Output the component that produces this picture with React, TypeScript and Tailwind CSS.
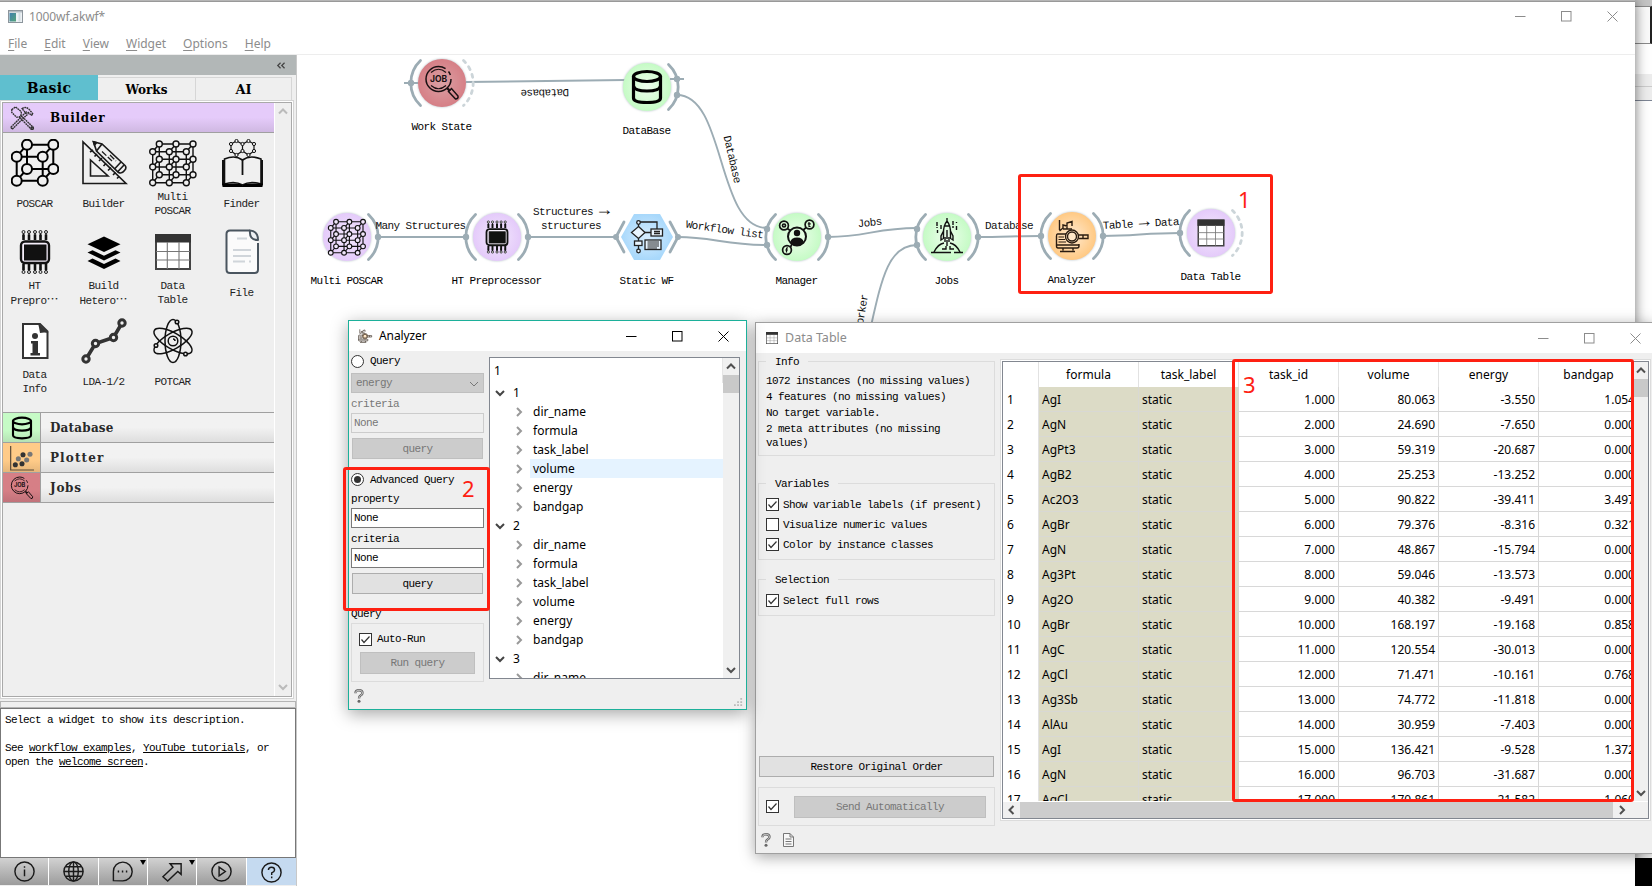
import React from "react";

const sim = "font-['Liberation_Mono',monospace] text-[11px] tracking-[-0.6px] whitespace-pre";
const slab = "font-['DejaVu_Serif',serif] font-bold whitespace-pre";
const wire = "#9cacb4";

/* ---------- glyphs ---------- */

type P = { className?: string };

const cubeEdges = "M5.7 17.7H31.7V41.7H5.7ZM16 5.7H42.3V30H16ZM5.7 17.7L16 5.7M31.7 17.7L42.3 5.7M5.7 41.7L16 30M31.7 41.7L42.3 30";
const cubeNodes = [[16, 5.7], [42.3, 5.7], [16, 30], [42.3, 30], [5.7, 17.7], [31.7, 17.7], [5.7, 41.7], [31.7, 41.7]];

const Cube = () => (
  <g stroke="#000" strokeWidth="2" fill="none">
    <path d={cubeEdges} />
    {cubeNodes.map(([x, y]) => <circle key={`${x}-${y}`} cx={x} cy={y} r="5" fill="#f0f0f0" />)}
  </g>
);

const fx = [3.7, 20.3, 37.3], fy = [12.7, 28, 43.7], bx = [10.3, 27, 44], by = [5, 20.3, 35.7];
const Lattice = ({ fill = "#f0f0f0" }: { fill?: string }) => (
  <g stroke="#111" strokeWidth="1.4" fill="none">
    {[0, 1, 2].map((i) => (
      <path key={i} d={`M${fx[0]} ${fy[i]}H${fx[2]}M${bx[0]} ${by[i]}H${bx[2]}M${fx[i]} ${fy[0]}V${fy[2]}M${bx[i]} ${by[0]}V${by[2]}`} />
    ))}
    {[0, 1, 2].map((i) => [0, 1, 2].map((j) => (
      <path key={`${i}${j}`} d={`M${fx[i]} ${fy[j]}L${bx[i]} ${by[j]}`} />
    )))}
    {[0, 1, 2].map((i) => [0, 1, 2].map((j) => (
      <g key={`${i}${j}`} fill={fill}>
        <circle cx={bx[i]} cy={by[j]} r="3" />
        <circle cx={fx[i]} cy={fy[j]} r="3" />
      </g>
    )))}
  </g>
);

const SetSquare = () => (
  <g stroke="#1a1a1a" strokeWidth="1.6" fill="none">
    <path d="M3 3V44.500H46ZM10.500 21V37H28Z" />
    <path d="M10 13l3-2M14.500 17.500l2.500-2.500M19 22l3-3M23.500 27l2.500-2.500M28 31.500l3-3M33 36l2.500-2.500M37 39.500l2-2" />
    <path d="M13.500 2.800L22 5 45 26.500Q47 29 44.500 31.500 42 35 38.500 33.500L16.500 12Z" fill="#f0f0f0" />
    <path d="M16.500 12L22 5M37.500 33L44 26M34.500 30L41 23" />
    <path d="M22 12.500l10 9.500M30 16l6 6" strokeWidth="1.300" strokeDasharray="6 2" />
    <path d="M13.500 2.800l3 .800-2 2.500z" fill="#111" />
  </g>
);

const Book = () => (
  <g stroke="#111" fill="none">
    <path d="M6 21V46.500M43 21V46.500" strokeWidth="4" />
    <path d="M6.500 20Q17 15.500 24.500 21 32 15.500 43 20V45Q32 41.500 24.500 46 17 41.500 6.500 45Z" fill="#f0f0f0" strokeWidth="1.6" />
    <path d="M24.500 21V36" strokeWidth="1.8" />
    <path d="M4.500 44.500H20Q23 44.500 24.500 46.500 26 44.500 30 44.500H44.500V48H4.500Z" fill="#000" stroke="none" />
    <path d="M18.500 2L24.500 5 30.500 2 36 5V12L30.500 16 24.500 12 18.500 16 13 12V5ZM24.500 5V12M18.500 16V18M30.500 16V18" strokeWidth="1.2" />
    {[[18.500, 2], [30.500, 2], [13, 5], [36, 5], [13, 12], [36, 12], [18.500, 16], [30.500, 16], [24.500, 5], [24.500, 12]].map(([x, y]) => (
      <circle key={`${x}-${y}`} cx={x} cy={y} r="1.6" fill="#f0f0f0" strokeWidth="1" />
    ))}
  </g>
);

const Chip = () => (
  <g stroke="#111" fill="none">
    <rect x="10" y="13.500" width="28" height="21.500" rx="4" strokeWidth="2.400" fill="#f5eefa" />
    <rect x="13.500" y="17" width="21.500" height="15" fill="#111" strokeWidth="1" />
    {[12.500, 18, 24, 29.500, 35].map((x) => (
      <g key={x}>
        <path d={`M${x} 6.500V12M${x} 36V42`} strokeWidth="2.600" />
        <path d={`M${x} 4V9M${x} 39V44`} strokeWidth="1.3" />
        <circle cx={x} cy="4" r="1.500" fill="#ddd" strokeWidth=".9" />
        <circle cx={x} cy="44" r="1.500" fill="#ddd" strokeWidth=".9" />
      </g>
    ))}
  </g>
);

const Layers = () => (
  <g fill="#000">
    <path d="M24 8.500L40.500 16.200 24 24 7.500 16.200Z" />
    <path d="M7.500 24.500L12.500 22.200 24 27.700 35.500 22.200 40.500 24.500 24 32.500Z" />
    <path d="M7.500 33L12.500 30.600 24 36 35.500 30.600 40.500 33 24 41Z" />
  </g>
);

const Grid = () => (
  <g>
    <rect x="7" y="7" width="34" height="34" fill="#fff" stroke="#444" strokeWidth="2" />
    <path d="M6 6H42V14.500H6Z" fill="#333" />
    <path d="M18.300 14V41M30 14V41M7 23.500H41M7 32H41" stroke="#777" strokeWidth="1.1" />
  </g>
);

const FileDoc = () => (
  <g fill="none" stroke="#4a555f" strokeWidth="2" strokeLinejoin="round">
    <path d="M32 2.500H12Q8.500 2.500 8.500 6V41.500Q8.500 45 12 45H36.500Q40 45 40 41.500V15" fill="#fbfbfb" />
    <path d="M32 2.500Q40 3 40 12 31 12 32 2.500Z" fill="#eef1f4" />
    <path d="M19 10.500H29M15 22H33M15 28H33M15 33.500H27M31 33.500H33" stroke="#d0d5da" strokeWidth="2" />
  </g>
);

const InfoDoc = () => (
  <g>
    <path d="M12 7H29L36.500 14.500V41H12Z" fill="#fff" stroke="#333" strokeWidth="2" />
    <path d="M27 6L37.500 16Q33 15 29 16 28 10 27 6Z" fill="#333" />
    <circle cx="24" cy="19" r="3" fill="#333" />
    <path d="M20 24H27V36H29V38.500H19.500V36H21.500V26.500H20Z" fill="#333" />
  </g>
);

const Polyline = () => (
  <g stroke="#333" fill="#f0f0f0">
    <path d="M6 42L15.500 26.500 33.500 20.500 42 6" fill="none" strokeWidth="3.600" />
    {[[6, 42], [15.500, 26.500], [33.500, 20.500], [42, 6]].map(([x, y]) => <circle key={x} cx={x} cy={y} r="3.200" strokeWidth="3" />)}
  </g>
);

const Atom = () => (
  <g fill="none" stroke="#111" strokeWidth="1.5">
    <ellipse cx="24" cy="24" rx="8" ry="21.500" />
    <ellipse cx="24" cy="24" rx="8" ry="21.500" transform="rotate(60 24 24)" />
    <ellipse cx="24" cy="24" rx="8" ry="21.500" transform="rotate(-60 24 24)" />
    <circle cx="24" cy="24" r="4.800" fill="#f0f0f0" />
    <path d="M24 22q2 0 2 2" />
    <circle cx="28" cy="5" r="1.800" fill="#f0f0f0" />
    <circle cx="7" cy="28.500" r="1.800" fill="#f0f0f0" />
    <circle cx="36.500" cy="37" r="1.800" fill="#f0f0f0" />
  </g>
);

const Cylinder = ({ fill = "none" }: { fill?: string }) => (
  <g stroke="#000" strokeWidth="3.200" fill={fill}>
    <path d="M10.500 13V35Q10.500 39.500 24 39.500T37.500 35V13" />
    <ellipse cx="24" cy="13.500" rx="13.500" ry="5" />
    <path d="M10.500 23Q11.500 28 24 28T37.500 23" fill="none" />
  </g>
);

const JobLens = () => (
  <g fill="none" stroke="#1a1012" strokeWidth="1.5">
    <circle cx="20.500" cy="20" r="12.500" strokeDasharray="66 4 4 4" />
    <path d="M13 13.500Q20.500 7 28 13.500M13 26.500Q20.500 33 28 26.500" strokeWidth="1.200" />
    <path d="M29 29L32 32" strokeWidth="2.400" />
    <path d="M30.500 32.500L33.500 29.500 40 37Q40.500 40 37.500 40Z" />
    <text x="20.500" y="23" textAnchor="middle" className="font-['Inter',sans-serif] text-[8.5px] font-bold" fill="#1a1012" stroke="none">JOB</text>
  </g>
);

const Scatter = () => (
  <g>
    <path d="M7 6V42H42" fill="none" stroke="#5b4a38" strokeWidth="1.8" />
    {[[14, 34], [24, 32.500], [25.500, 19]].map(([x, y]) => <circle key={x} cx={x} cy={y} r="3.800" fill="#333" />)}
    {[[18.500, 25], [31, 27], [36, 18.500]].map(([x, y]) => <circle key={x} cx={x} cy={y} r="3.800" fill="#777" />)}
  </g>
);

const Tools = () => (
  <g fill="none" stroke="#333" strokeWidth="1.500">
    <path d="M3 5L7 2 13 7Q14 11 11 13L8 13 3 8ZM10.500 12.500L24 26M12.500 11L26 24Q26 27 24 26" strokeDasharray="2 .6" />
    <path d="M2 24L19 7M3.500 26L21 9M2 24L3.500 26M14 4Q18 1 22 5L26 10 24 11 21 8 18 9 16 6Z" strokeDasharray="2 .6" />
    <circle cx="25" cy="25" r="1.300" />
  </g>
);

const FlowChart = () => (
  <g fill="#e9f5ff" stroke="#222" strokeWidth="1.300">
    <path d="M15.500 9V40M15.500 9H34V18M20 19.500H28" fill="none" />
    <circle cx="15.500" cy="9.500" r="1.800" />
    <path d="M15.500 13.500L22 19.500 15.500 25.500 8.500 19.500Z" />
    <rect x="28" y="16" width="11.500" height="7" />
    <path d="M31 18.500H37M31 20.500H37" />
    <rect x="11.500" y="28" width="7.500" height="4.500" />
    <circle cx="15.500" cy="38" r="1.800" />
    <rect x="22" y="27" width="16" height="9.500" />
    <path d="M24.500 29H36M24.500 31H36M24.500 33H36M24.500 35H34" strokeWidth="1" />
  </g>
);

const Network = () => (
  <g fill="none" stroke="#111" strokeWidth="1.700">
    <path d="M12 14L18 18M35 13L29 18M17 35L20 29" />
    <circle cx="24" cy="23.500" r="9" strokeWidth="2" fill="#e4ffe2" />
    <circle cx="24" cy="20" r="3.200" fill="#111" stroke="none" />
    <path d="M17.500 29Q18 24.500 24 24.500T30.500 29Q28 32.500 24 32.500T17.500 29Z" fill="#111" stroke="none" />
    <circle cx="11" cy="12.500" r="4.400" fill="#dcfbd9" />
    <circle cx="36.500" cy="11.500" r="4.400" fill="#dcfbd9" />
    <circle cx="14" cy="37" r="4.400" fill="#dcfbd9" />
    <circle cx="11" cy="12.500" r="1.500" />
    <path d="M36 9V13.500H37.500M34.800 10.800H37.800M15 35Q13.500 34.500 13.500 36V39.500M12.300 37H15" strokeWidth="1.200" />
  </g>
);

const Rocket = () => (
  <g fill="none" stroke="#111" strokeWidth="1.400">
    <path d="M24 8Q20 13 20.500 21V25H27.500V21Q28 13 24 8ZM24 8V5M20.500 18L18 23V27L21 25M27.500 18L30 23V27L27 25M22 13H26M24 17V24M24 27V33M22 26V29M26 26V29" />
    <path d="M14 9V15M14.500 17V20M18 12V17M30 8V15M33.500 9V10M33.500 13V18" strokeDasharray="4 1" />
    <path d="M11 39Q15 31 21 30M37 39Q33 31 27 30M8 39.500H28M31 39.500H40M19 36H23V33M27 33V36H31" />
  </g>
);

const Analyze = () => (
  <g fill="none" stroke="#2a1c10" strokeWidth="1.400">
    <path d="M11.500 8V18M11.500 19L15 16V13L19 14V11L24 9.500V14M15 17H24M19 14V17" />
    <path d="M20 22H9.500Q8.500 22 8.500 24V34Q8.500 36 10 36H29Q31 36 31 34V32M8.500 33H31M15 36V38.500M25 36V38.500M12 39.500H27" />
    <path d="M10.500 25H16M10.500 27.500H17M10.500 30H18" strokeWidth="1.100" />
    <circle cx="24" cy="24.500" r="6.500" fill="#ffe7c7" />
    <circle cx="24" cy="24.500" r="4.500" />
    <path d="M30.500 23H40V26.500H30.500M35 23V26.500" />
  </g>
);

const Icon = ({ className, children }: P & { children: React.ReactNode }) => (
  <svg viewBox="0 0 48 48" className={className ?? "size-12"}>{children}</svg>
);

const Chevron = ({ dir, className, w = 2 }: { dir: "up" | "down" | "left" | "right"; className?: string; w?: number }) => {
  const d = { up: "M1 6.500L5 2.500 9 6.500", down: "M1 3L5 7 9 3", left: "M6.500 1L2.500 5 6.500 9", right: "M3 1L7 5 3 9" }[dir];
  return <svg viewBox="0 0 10 10" className={className ?? "size-2.5"}><path d={d} fill="none" stroke="currentColor" strokeWidth={w} /></svg>;
};

const WinButtons = ({ className = "" }: P) => (
  <div className={`flex items-center gap-[35px] ${className}`}>
    <svg className="size-[11px]" viewBox="0 0 11 11"><path d="M0 5.500H10.500" stroke="currentColor" /></svg>
    <svg className="size-[11px]" viewBox="0 0 11 11"><rect x=".5" y=".5" width="9.500" height="9.500" fill="none" stroke="currentColor" /></svg>
    <svg className="size-[11px]" viewBox="0 0 11 11"><path d="M.5 .5L10.500 10.500M10.500 .5L.5 10.500" stroke="currentColor" /></svg>
  </div>
);

const Check = ({ on = true }: { on?: boolean }) => (
  <svg viewBox="0 0 13 13" className="size-[13px] shrink-0">
    <rect x=".5" y=".5" width="12" height="12" fill="#fff" stroke="#333" />
    {on && <path d="M2.500 6.500L5 9.500 10.500 3.500" fill="none" stroke="#333" strokeWidth="1.200" />}
  </svg>
);

const Radio = ({ on = false }: { on?: boolean }) => (
  <svg viewBox="0 0 13 13" className="size-[13px] shrink-0">
    <circle cx="6.500" cy="6.500" r="6" fill="#fff" stroke="#333" />
    {on && <circle cx="6.500" cy="6.500" r="3.500" fill="#333" />}
  </svg>
);

const HelpMark = () => (
  <svg viewBox="0 0 10 14" className="h-[14px] w-[10px]">
    <path d="M1.500 4.200Q1.500 1.200 5 1.200T8.500 4Q8.500 5.500 6.500 6.500 5 7.300 5 9.500" fill="none" stroke="#666" strokeWidth="2.400" />
    <path d="M1.500 4.200Q1.500 1.200 5 1.200T8.500 4Q8.500 5.500 6.500 6.500 5 7.300 5 9.500" fill="none" stroke="#ddd" strokeWidth=".8" />
    <circle cx="5" cy="12.300" r="1.500" fill="#666" />
  </svg>
);

/* ---------- sidebar ---------- */

const Dots = () => <span lang="zh-CN" className="font-['Noto_Sans_CJK_SC',sans-serif] text-[12px] leading-none tracking-normal">…</span>;

const tools: { id: string; icon: React.ReactNode; label: React.ReactNode }[] = [
  { id: "poscar", icon: <Cube />, label: "POSCAR" },
  { id: "builder", icon: <SetSquare />, label: "Builder" },
  { id: "multi", icon: <Lattice />, label: "Multi\nPOSCAR" },
  { id: "finder", icon: <Book />, label: "Finder" },
  { id: "ht", icon: <Chip />, label: <>{"HT\nPrepro"}<Dots /></> },
  { id: "hetero", icon: <Layers />, label: <>{"Build\nHetero"}<Dots /></> },
  { id: "table", icon: <Grid />, label: "Data\nTable" },
  { id: "file", icon: <FileDoc />, label: "File" },
  { id: "info", icon: <InfoDoc />, label: "Data\nInfo" },
  { id: "lda", icon: <Polyline />, label: "LDA-1/2" },
  { id: "potcar", icon: <Atom />, label: "POTCAR" },
];

const categories = [
  { label: "Database", track: "tracking-[0.2px]", bg: "bg-linear-to-b from-[#c6fbc6] from-60% to-[#b5e2b4]", icon: <Cylinder /> },
  { label: "Plotter", track: "tracking-[1.1px]", bg: "bg-linear-to-b from-[#ffcb88] from-60% to-[#e6b67a]", icon: <Scatter /> },
  { label: "Jobs", track: "tracking-[0.7px]", bg: "bg-linear-to-b from-[#d67f86] from-60% to-[#c1727a]", icon: <JobLens /> },
];

const footIcons = [
  <g key="i"><circle cx="12" cy="12" r="10" /><path d="M12 10V17M12 6.500V8.200" /></g>,
  <g key="g"><circle cx="12" cy="12" r="10" /><ellipse cx="12" cy="12" rx="5" ry="10" /><path d="M12 2V22M2 12H22M4 7H20M4 17H20" /></g>,
  <g key="c"><path d="M2.500 21.500V12A9.800 9.800 0 1 1 12 21.800Z" /><path d="M7 12H8.500M11.300 12H12.800M15.500 12H17" strokeWidth="2" /></g>,
  <g key="a"><path d="M2 17.500L12.500 7.500 9.500 4H21V15L17.500 12 7 22Z" /></g>,
  <g key="p"><circle cx="12" cy="12" r="10" /><path d="M9.500 7.500L16 12 9.500 16.500Z" /></g>,
  <g key="h"><circle cx="12" cy="12" r="10" /><path d="M8.800 9.500Q8.800 6.500 12 6.500T15.200 9.300Q15.200 11 12.200 12.500V14.500M12.200 16.200V18" /></g>,
];

const Sidebar = () => (
  <aside className="flex w-[297px] shrink-0 flex-col border-r border-[#c8c8c8] bg-[#efefef]">
    <div className="flex h-5 items-center justify-end bg-[#b2b7b7] pr-[9px] text-[#444]">
      <Chevron dir="left" className="size-[7px]" w={1.8} /><Chevron dir="left" className="-ml-[3px] size-[7px]" w={1.8} />
    </div>
    <div className="flex h-[25px] shrink-0">
      <div className={`flex w-[98px] items-center justify-center bg-[#5fbfcf] pt-px text-[14px] tracking-[0.4px] ${slab}`}>Basic</div>
      <div className={`mt-0.5 flex w-[98px] items-center justify-center border-t border-r border-[#d6d6d6] pt-px text-[12px] ${slab}`}>Works</div>
      <div className={`mt-0.5 mr-1 flex flex-1 items-center justify-center border-t border-r border-[#d6d6d6] pt-px text-[13px] ${slab}`}>AI</div>
    </div>
    <div className="mr-[2px] flex h-[599px] shrink-0 border border-[#d4d4d4] bg-white p-px">
      <div className="flex flex-1 border border-[#a9a9a9] bg-[#efefef]">
        <div className="flex w-[272px] flex-col border-r border-white">
          <div className="flex h-[30px] shrink-0 items-center border-b border-[#a0a0a0] bg-linear-to-b from-[#e5cbfa] from-50% to-[#cfb8e2] pl-[6px]">
            <svg viewBox="0 0 28 28" className="size-[26px]"><Tools /></svg>
            <span className={`ml-[15px] text-[12px] tracking-[0.7px] ${slab}`}>Builder</span>
          </div>
          <div className="grid shrink-0 grid-cols-[69px_69px_69px_69px]">
            {tools.map((t) => (
              <div key={t.id} className="-ml-[6px] flex h-[89px] flex-col items-center pt-[6px]">
                <Icon>{t.icon}</Icon>
                <span className={`flex h-[34px] items-center text-center leading-[14px] text-[#222] ${sim}`}><span>{t.label}</span></span>
              </div>
            ))}
          </div>
          <div className="mt-[12px] border-b border-[#a0a0a0]">
            {categories.map((c) => (
              <div key={c.label} className="flex h-[30px] border-t border-[#a0a0a0] bg-linear-to-b from-[#f2f2f2] from-50% to-[#dedede]">
                <div className={`flex w-[38px] items-center justify-center border-r border-[#a0a0a0] ${c.bg}`}>
                  <Icon className="size-[32px]">{c.icon}</Icon>
                </div>
                <span className={`ml-[9px] self-center text-[12px] text-[#2a2a2a] ${c.track} ${slab}`}>{c.label}</span>
              </div>
            ))}
          </div>
        </div>
        <div className="flex flex-1 flex-col items-center justify-between py-1 text-[#bbb]">
          <Chevron dir="up" /><Chevron dir="down" />
        </div>
      </div>
    </div>
    <div className="mt-[2px] h-[7px] shrink-0 border border-[#b4b4b4] bg-[#efefef]" />
    <div className={`h-[150px] shrink-0 border border-[#777] bg-white pt-[4px] pl-[4px] leading-[14px] ${sim}`}>
      Select a widget to show its description.{"\n\n"}See <u>workflow examples</u>, <u>YouTube tutorials</u>, or{"\n"}open the <u>welcome screen</u>.
    </div>
    <div className="flex h-[27px] shrink-0 gap-px bg-white">
      {footIcons.map((g, i) => (
        <div key={i} className={`relative flex flex-1 items-center justify-center ${i === 5 ? "bg-[#c5daf0] pt-px pl-px" : "bg-linear-to-b from-[#d2d2d2] to-[#9c9c9c]"}`}>
          <svg viewBox="0 0 24 24" className="size-[23px]" fill="none" stroke="#1a1a1a" strokeWidth="1.500">{g}</svg>
          {(i === 2 || i === 3) && <svg viewBox="0 0 6 5" className="absolute top-[2px] right-px h-[5px] w-[6px]"><path d="M0 0H6L3 5Z" /></svg>}
        </div>
      ))}
    </div>
  </aside>
);

/* ---------- workflow canvas ---------- */

type NodeDef = { x: number; y: number; label: string; ly: number; kind: string; left?: number[]; right?: number[]; dashed?: boolean; icon: React.ReactNode; s?: number };

const nodes: NodeDef[] = [
  { x: 442, y: 83, label: "Work State", ly: 126, kind: "red", left: [0], dashed: true, icon: <JobLens />, s: 1 },
  { x: 647, y: 87, label: "DataBase", ly: 130, kind: "green", right: [-8, 8], icon: <Cylinder />, s: 1 },
  { x: 347, y: 237, label: "Multi POSCAR", ly: 280, kind: "purple", right: [0], icon: <Lattice fill="#f1e6fb" />, s: 0.8 },
  { x: 497, y: 237, label: "HT Preprocessor", ly: 280, kind: "purple", left: [0], right: [0], icon: <Chip />, s: 0.75 },
  { x: 647, y: 237, label: "Static WF", ly: 280, kind: "blue", icon: <FlowChart />, s: 1 },
  { x: 797, y: 237, label: "Manager", ly: 280, kind: "green", left: [-8, 8], right: [0], icon: <Network />, s: 1 },
  { x: 947, y: 237, label: "Jobs", ly: 280, kind: "green", left: [-8, 8], right: [0], icon: <Rocket />, s: 1 },
  { x: 1072, y: 236, label: "Analyzer", ly: 279, kind: "orange", left: [0], right: [0], icon: <Analyze />, s: 1 },
  { x: 1211, y: 233, label: "Data Table", ly: 276, kind: "purple", left: [0], dashed: true, icon: <Grid />, s: 0.75 },
];

const tints: Record<string, [string, string]> = {
  red: ["#dba0a4", "#d67f86"],
  green: ["#eefded", "#c5fbc5"],
  purple: ["#f3e9fc", "#e4cafa"],
  blue: ["#d6edff", "#a8d8fb"],
  orange: ["#ffe9cf", "#ffc983"],
};

const Canvas = () => (
  <svg viewBox="297 55 1338 831" className="h-[831px] flex-1" fill="none">
    <defs>
      {Object.entries(tints).map(([k, [a, b]]) => (
        <radialGradient key={k} id={`tint-${k}`}><stop offset="0" stopColor={a} /><stop offset="1" stopColor={b} /></radialGradient>
      ))}
      <filter id="halo" x="-30%" y="-30%" width="160%" height="160%"><feDropShadow dx="0" dy="0" stdDeviation="1.300" floodColor="#9cacb4" floodOpacity=".8" /></filter>
    </defs>
    <g stroke={wire} strokeWidth="1.900">
      <path d="M404 83H420M466 82L625 80M670 79H684" />
      <path d="M677 95C726 95 716 228 767 228" />
      <path d="M678 237C712 237 726 245 767 245M828 237C866 237 876 228 917 228M917 245C889 245 882 277 871 326" />
      <path d="M378 237H466M528 237H616M978 237C1000 237 1020 236 1041 236M1103 236C1135 236 1145 233 1180 233" />
    </g>
    {nodes.map((n) => {
      const s = n.s ?? 1;
      return (
        <g key={n.label} transform={`translate(${n.x} ${n.y})`}>
          {n.kind === "blue" ? (
            <>
              <path d="M-23 -15L-31 0L-23 15M23 -15L31 0L23 15" stroke={wire} strokeWidth="2.800" strokeLinecap="round" />
              <circle cx="-31" r="3" fill={wire} /><circle cx="31" r="3" fill={wire} />
              <path d="M-13 -23H13L26 0 13 23H-13L-26 0Z" fill="url(#tint-blue)" />
            </>
          ) : (
            <>
              {n.left && <path d="M-21.500 -22.500A31 31 0 0 0 -21.500 22.500" stroke={wire} strokeWidth="2.800" strokeLinecap="round" />}
              {n.right && <path d="M21.500 -22.500A31 31 0 0 1 21.500 22.500" stroke={wire} strokeWidth="2.800" strokeLinecap="round" />}
              {n.dashed && <path d="M21.500 -22.500A31 31 0 0 1 21.500 22.500" stroke="#ccd5d9" strokeWidth="2.800" strokeLinecap="round" strokeDasharray="3 5.200" />}
              {n.left?.map((d) => <circle key={d} cx={d ? -30 : -31} cy={d} r="3.200" fill={wire} />)}
              {n.right?.map((d) => <circle key={d} cx={d ? 30 : 31} cy={d} r="3.200" fill={wire} />)}
              <circle r="24" fill={`url(#tint-${n.kind})`} filter="url(#halo)" />
            </>
          )}
          <g transform={`scale(${s}) translate(-24 -24)`}>{n.icon}</g>
          <text x="-0.6" y={n.ly - n.y + 3.500} textAnchor="middle" fill="#000" className={sim}>{n.label}</text>
        </g>
      );
    })}
    <g fill="#111" textAnchor="middle" className={sim}>
      <text transform="translate(545 89.500) rotate(179)">Database</text>
      <text x="420.500" y="229">Many Structures</text>
      <text x="571" y="215">Structures <tspan className="text-[18px]">→</tspan></text>
      <text x="571" y="229">structures</text>
      <text transform="translate(729 160) rotate(77)">Database</text>
      <text transform="translate(724 233) rotate(8)">Workflow list</text>
      <text transform="translate(870 226) rotate(-6)">Jobs</text>
      <text transform="translate(865 313) rotate(-81)">Worker</text>
      <text x="1009" y="229">Database</text>
      <text transform="translate(1141 227) rotate(-3)">Table <tspan className="text-[18px]">→</tspan> Data</text>
    </g>
  </svg>
);

/* ---------- analyzer ---------- */

const fields = ["dir_name", "formula", "task_label", "volume", "energy", "bandgap"];
const treeRows: { t: string; root?: boolean; hot?: boolean }[] = [
  { t: "1", root: true }, ...fields.map((t) => ({ t, hot: t === "volume" })),
  { t: "2", root: true }, ...fields.map((t) => ({ t })),
  { t: "3", root: true }, { t: "dir_name" },
];

const Analyzer = () => (
  <section className="absolute top-[320px] left-[348px] flex h-[390px] w-[399px] flex-col border border-[#1cb09a] bg-[#efefef] shadow-[0_4px_16px_rgba(0,0,0,0.35)]">
    <header className="flex h-[30px] shrink-0 items-center bg-white pl-[6px] text-xs">
      <Icon className="size-5"><g strokeWidth="3"><Analyze /></g></Icon>
      <span className="ml-[4px] tracking-[-0.1px]">Analyzer</span>
      <WinButtons className="mr-[17px] ml-auto" />
    </header>
    <div className="flex">
      <div className={`flex w-[140px] flex-col pl-[2px] ${sim}`}>
        <div className="mt-[3px] flex h-[14px] items-center gap-[6px]"><Radio />Query</div>
        <div className="mt-[5px] flex h-5 w-[133px] items-center justify-between border border-[#bfbfbf] bg-[#ccc] pt-px pr-1 pl-1 text-[#777]">energy<Chevron dir="down" w={1} /></div>
        <div className="flex h-5 items-center pt-[2px] text-[#777]">criteria</div>
        <div className="flex h-5 w-[133px] items-center border border-[#ccc] pt-px pl-[2px] text-[#777]">None</div>
        <div className="mt-[5px] ml-px flex h-[21px] w-[131px] items-center justify-center border border-[#bfbfbf] bg-[#ccc] pt-[2px] text-[#777]">query</div>
        <div className="mt-[13px] flex h-[14px] items-center gap-[6px]"><Radio on /><span className="pt-[2px]">Advanced Query</span></div>
        <div className="mt-[2px] flex h-5 items-center pt-[2px]">property</div>
        <div className="flex h-5 w-[133px] items-center border border-[#7a7a7a] bg-white pt-px pl-[2px]">None</div>
        <div className="flex h-5 items-center pt-[2px]">criteria</div>
        <div className="flex h-5 w-[133px] items-center border border-[#7a7a7a] bg-white pt-px pl-[2px]">None</div>
        <div className="mt-[5px] ml-px flex h-[21px] w-[131px] items-center justify-center border border-[#adadad] bg-[#e1e1e1] pt-[2px]">query</div>
        <div className="mt-[12px] flex h-4 items-center">Query</div>
        <div className="mt-px h-[59px] w-[133px] border border-[#dcdcdc] px-[7px] pt-[8px]">
          <div className="flex h-[14px] items-center gap-[5px]"><Check />Auto-Run</div>
          <div className="mt-[6px] ml-[1px] flex h-[22px] w-[115px] items-center justify-center border border-[#bfbfbf] bg-[#ccc] pt-px text-[#777]">Run query</div>
        </div>
      </div>
      <div className="mt-[6px] flex h-[322px] w-[251px] overflow-hidden border border-[#828790] bg-white text-xs">
        <div className="flex-1">
          <div className="flex h-[25px] items-center border-r border-[#e5e5e5] pl-[4px]">1</div>
          {treeRows.map((r, i) => (
            <div key={i} className="flex h-[19px]">
              {r.root ? (
                <div className="flex items-center gap-[8px] pl-[5px] text-[#444]"><Chevron dir="down" /><span className="text-black">{r.t}</span></div>
              ) : (
                <>
                  <div className="flex w-10 items-center pl-[24px] text-[#999]"><Chevron dir="right" /></div>
                  <div className={`flex flex-1 items-center pl-[3px] ${r.hot ? "bg-[#e5f3ff]" : ""}`}>{r.t}</div>
                </>
              )}
            </div>
          ))}
        </div>
        <div className="flex w-4 flex-col items-center bg-[#f0f0f0] text-[#505050]">
          <div className="flex h-[17px] items-center pt-px"><Chevron dir="up" /></div>
          <div className="h-[18px] w-full bg-[#c9c9c9]" />
          <div className="mt-auto mb-[3px]"><Chevron dir="down" /></div>
        </div>
      </div>
    </div>
    <div className="flex flex-1 items-center justify-between pt-px pl-[5px]">
      <HelpMark />
      <svg viewBox="0 0 10 10" className="mr-[3px] mb-[2px] size-[9px] self-end" fill="#bbb"><path d="M7 0h2v2H7zM7 3.500h2v2H7zM3.500 3.500h2v2h-2zM7 7h2v2H7zM3.500 7h2v2h-2zM0 7h2v2H0z" /></svg>
    </div>
  </section>
);

/* ---------- data table ---------- */

const rows: string[][] = [
  ["AgI", "80.063", "-3.550", "1.054"], ["AgN", "24.690", "-7.650", "0.000"], ["AgPt3", "59.319", "-20.687", "0.000"],
  ["AgB2", "25.253", "-13.252", "0.000"], ["Ac2O3", "90.822", "-39.411", "3.497"], ["AgBr", "79.376", "-8.316", "0.321"],
  ["AgN", "48.867", "-15.794", "0.000"], ["Ag3Pt", "59.046", "-13.573", "0.000"], ["Ag2O", "40.382", "-9.491", "0.000"],
  ["AgBr", "168.197", "-19.168", "0.858"], ["AgC", "120.554", "-30.013", "0.000"], ["AgCl", "71.471", "-10.161", "0.768"],
  ["Ag3Sb", "74.772", "-11.818", "0.000"], ["AlAu", "30.959", "-7.403", "0.000"], ["AgI", "136.421", "-9.528", "1.372"],
  ["AgN", "96.703", "-31.687", "0.000"], ["AgCl", "170.861", "-21.582", "1.060"],
];
const cols = "grid w-[636px] grid-cols-[36px_100px_100px_100px_100px_100px_100px]";

const Group = ({ title, className, children }: { title?: string; className: string; children: React.ReactNode }) => (
  <div className={`relative w-[237px] border border-[#dcdcdc] ${className}`}>
    {title && <span className={`absolute -top-[8px] left-[7px] bg-[#efefef] px-[9px] leading-4 ${sim}`}>{title}</span>}
    {children}
  </div>
);

const DataTable = () => (
  <section className="absolute top-[322px] left-[755px] flex h-[532px] w-[900px] flex-col border border-[#a0a0a0] bg-[#efefef] shadow-[0_3px_14px_rgba(0,0,0,0.35)]">
    <header className="flex h-[30px] shrink-0 items-center bg-white pl-[8px] text-xs text-[#8c8c8c]">
      <Icon className="size-4"><Grid /></Icon>
      <span className="ml-[5px] text-[12.5px]">Data Table</span>
      <WinButtons className="mr-[13px] ml-auto" />
    </header>
    <div className="flex h-[473px] shrink-0 pl-[2px]">
      <div className="flex w-[237px] shrink-0 flex-col">
        <Group title="Info" className="mt-2 h-[95px]">
          <div className={`pt-[11px] pl-[7px] leading-4 ${sim}`}>{"1072 instances (no missing values)\n4 features (no missing values)\nNo target variable."}</div>
          <div className={`pt-px pl-[7px] leading-[14px] ${sim}`}>{"2 meta attributes (no missing\nvalues)"}</div>
        </Group>
        <Group title="Variables" className="mt-[27px] h-[77px]">
          <div className={`flex flex-col gap-[7px] pt-[14px] pl-[7px] leading-[15px] ${sim}`}>
            <div className="flex h-[13px] gap-[4px]"><Check />Show variable labels (if present)</div>
            <div className="flex h-[13px] gap-[4px]"><Check on={false} />Visualize numeric values</div>
            <div className="flex h-[13px] gap-[4px]"><Check />Color by instance classes</div>
          </div>
        </Group>
        <Group title="Selection" className="mt-[19px] h-[37px]">
          <div className={`flex gap-[4px] pt-[14px] pl-[7px] leading-[15px] ${sim}`}><Check />Select full rows</div>
        </Group>
        <div className={`mt-auto ml-px flex h-[21px] w-[235px] shrink-0 items-center justify-center border border-[#adadad] bg-[#e1e1e1] pt-px ${sim}`}>Restore Original Order</div>
        <Group className="mt-[10px] flex h-[39px] shrink-0 items-center gap-[15px] pl-[7px]">
          <Check />
          <div className={`flex h-[22px] w-[192px] items-center justify-center border border-[#bfbfbf] bg-[#ccc] pt-px text-[#777] ${sim}`}>Send Automatically</div>
        </Group>
      </div>
      <div className="mt-[6px] ml-[5px] flex h-[462px] w-[651px] shrink-0 border border-[#dcdcdc] bg-white p-px">
        <div className="flex flex-1 flex-col overflow-hidden border border-[#828790] text-xs">
          <div className="flex h-[439px] shrink-0">
            <div className="w-[630px] overflow-hidden">
              <div className={`${cols} h-[25px]`}>
                {["", "formula", "task_label", "task_id", "volume", "energy", "bandgap"].map((h) => (
                  <div key={h} className="flex items-center justify-center border-r border-[#e2e2e2]">{h}</div>
                ))}
              </div>
              {rows.map((r, i) => (
                <div key={i} className={`${cols} h-[25px]`}>
                  <div className="flex items-center border-r border-[#e2e2e2] pt-px pl-[4px]">{i + 1}</div>
                  <div className="flex items-center border-r border-b border-[#d8d8d4] bg-[#dcdbc6] pt-[2px] pl-[3px]">{r[0]}</div>
                  <div className="flex items-center border-r border-b border-[#d8d8d4] bg-[#dcdbc6] pt-[2px] pl-[3px]">static</div>
                  {[`${i + 1}.000`, r[1], r[2], r[3]].map((v, j) => (
                    <div key={j} className="flex items-center justify-end border-r border-b border-[#d8d8d8] pt-[2px] pr-[3px]">{v}</div>
                  ))}
                </div>
              ))}
            </div>
            <div className="flex flex-1 flex-col items-center bg-[#f0f0f0] text-[#505050]">
              <div className="flex h-[17px] items-center pt-px"><Chevron dir="up" /></div>
              <div className="h-[18px] w-full bg-[#c9c9c9]" />
              <div className="mt-auto mb-[3px]"><Chevron dir="down" /></div>
            </div>
          </div>
          <div className="mt-px flex flex-1 bg-[#f0f0f0] text-[#505050]">
            <div className="flex w-[17px] items-center justify-center"><Chevron dir="left" /></div>
            <div className="w-[593px] bg-[#cdcdcd]" />
            <div className="flex w-[17px] items-center justify-center"><Chevron dir="right" /></div>
          </div>
        </div>
      </div>
    </div>
    <div className="flex flex-1 items-center gap-[12px] pt-px pl-[5px]">
      <HelpMark />
      <svg viewBox="0 0 11 14" className="h-[14px] w-[11px]" fill="#f8f8f8" stroke="#777"><path d="M.5 .5H7L10.500 4V13.500H.5ZM7 .5V4H10.500M2.500 6H8.500M2.500 8.500H8.500M2.500 11H8.500" /></svg>
    </div>
  </section>
);

/* ---------- desktop ---------- */

export default function App() {
  return (
    <div className="relative h-[886px] w-[1652px] overflow-hidden bg-white font-['Noto_Sans','Noto_Sans_CJK_SC',sans-serif] leading-normal text-black">
      <div className="absolute top-0 right-0 flex h-[886px] w-[30px] flex-col bg-white">
        <div className="h-[6px] bg-[#c4c4c4]" />
        <div className="h-[38px] border-t border-r-2 border-b border-[#8a8a8a] border-r-[#222] bg-[#fafafa]" />
        <div className="h-[30px]" />
        <div className="h-[13px] border-b border-[#ccc] bg-[#ededed]" />
        <div className="h-[14px] border-b border-[#7d8594] bg-[#ededed]" />
        <div className="mt-auto h-7 bg-black" />
      </div>
      <main className="absolute top-0 left-0 flex h-[886px] w-[1635px] flex-col border-t border-[#b5b5b5] bg-white shadow-[0_0_12px_rgba(0,0,0,0.55)]">
        <div className="h-px shrink-0 bg-[#999]" />
        <header className="flex h-[28px] shrink-0 items-center pl-2 text-xs text-[#8c8c8c]">
          <svg viewBox="0 0 15 13" className="h-[13px] w-[15px]"><defs><linearGradient id="app" x2="1" y2="1"><stop stopColor="#3f7fae" /><stop offset="1" stopColor="#56a37b" /></linearGradient></defs><rect x=".5" y=".5" width="14" height="12" fill="#eef2f5" stroke="#8c959c" /><path d="M1 1H14V2.500H1Z" fill="#b4bcc3" /><rect x="1.500" y="3" width="6.500" height="8.500" fill="url(#app)" /><rect x="10.500" y="3" width="2" height="8.500" fill="#d2dde4" /></svg>
          <span className="ml-[6px] pt-px tracking-[-0.1px]">1000wf.akwf*</span>
          <WinButtons className="mr-[17px] ml-auto" />
        </header>
        <nav className="flex h-[25px] shrink-0 items-center gap-[17px] border-b border-[#ededed] pt-[4px] pl-2 text-xs text-[#8c8c8c]">
          {["File", "Edit", "View", "Widget", "Options", "Help"].map((m) => (
            <span key={m}><u className="underline-offset-2">{m[0]}</u>{m.slice(1)}</span>
          ))}
        </nav>
        <div className="flex min-h-0 flex-1">
          <Sidebar />
          <Canvas />
        </div>
      </main>
      <DataTable />
      <Analyzer />
      <div className="absolute top-[174px] left-[1018px] h-[120px] w-[255px] rounded-[3px] border-3 border-[#fe2012]" />
      <span className="absolute top-[183px] left-[1238px] text-[22px] leading-8 text-[#fe2012]">1</span>
      <div className="absolute top-[467px] left-[343px] h-[144px] w-[147px] rounded-[3px] border-3 border-[#fe2012]" />
      <span className="absolute top-[472px] left-[462px] text-[22px] leading-8 text-[#fe2012]">2</span>
      <div className="absolute top-[359px] left-[1232px] h-[443px] w-[402px] rounded-[3px] border-3 border-[#fe2012]" />
      <span className="absolute top-[368px] left-[1243px] text-[22px] leading-8 text-[#fe2012]">3</span>
    </div>
  );
}
